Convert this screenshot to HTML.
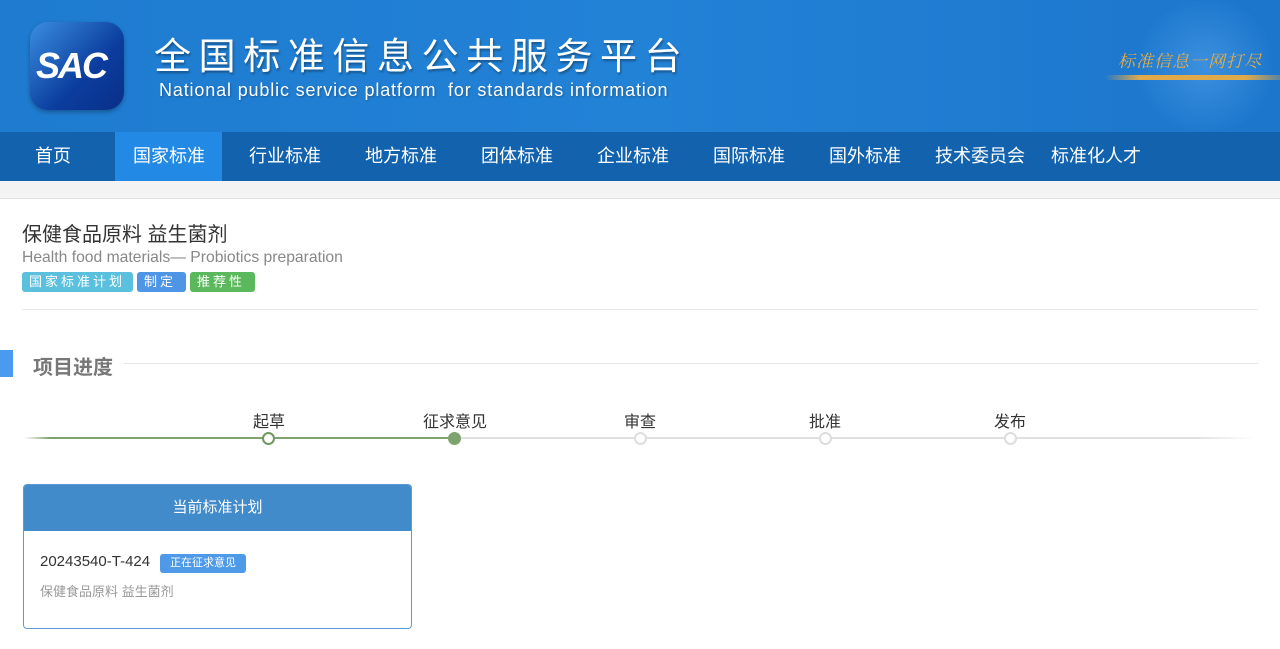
<!DOCTYPE html>
<html><head><meta charset="utf-8"><style>
*{margin:0;padding:0;box-sizing:border-box}
body{width:1280px;height:649px;overflow:hidden;background:#fff;font-family:"Liberation Sans","Noto Sans CJK SC",sans-serif;position:relative}
.hd{position:absolute;left:0;top:0;width:1280px;height:132px;background:linear-gradient(90deg,#1e7bd0 0%,#2282d6 50%,#1c76cc 100%)}
.nav{position:absolute;left:0;top:132px;width:1280px;height:49px;background:#1262ae}
.nav span{position:absolute;top:0;height:49px;line-height:49px;color:#fff;font-size:18px}
.band{position:absolute;left:0;top:181px;width:1280px;height:18px;background:#f3f3f3;border-bottom:1px solid #e2e2e2}
.abs{position:absolute}
.tag{position:absolute;top:272px;height:20px;line-height:20px;color:#fff;font-size:13px;letter-spacing:3px;border-radius:3px;padding-left:7px}
.lbl{position:absolute;top:408px;font-size:16px;color:#333;transform:translateX(-50%)}
.dot{position:absolute;top:432px;width:13px;height:13px;border-radius:50%;background:#fff;border:2px solid #ddd}
</style></head><body>
<div class="hd">
 <div class="abs" style="left:30px;top:22px;width:94px;height:88px;border-radius:18px;background:linear-gradient(135deg,#3a8ee0,#0b3d9e 60%,#0a2f88);box-shadow:0 2px 4px rgba(0,0,0,.3)"></div>
 <div class="abs" style="left:36px;top:45px;font:italic bold 36px 'Liberation Sans',sans-serif;color:#fff;letter-spacing:-2px">SAC</div>
 <div class="abs" style="left:154px;top:26px;font-size:37px;color:#fff;letter-spacing:7.6px;text-shadow:1px 2px 2px rgba(0,0,0,.35)">全国标准信息公共服务平台</div>
 <div class="abs" style="left:159px;top:80px;font-size:18px;color:#fff;letter-spacing:0.85px;text-shadow:1px 1px 2px rgba(0,0,0,.3);white-space:pre">National public service platform  for standards information</div>
 <div class="abs" style="left:1130px;top:0;width:150px;height:132px;border-radius:50%;background:radial-gradient(circle,rgba(120,190,255,.35),rgba(30,120,210,0) 70%)"></div>
 <div class="abs" style="left:1105px;top:75px;width:175px;height:5px;background:linear-gradient(90deg,rgba(230,170,60,0),#e0a94a 20%,#e0a94a 80%,rgba(230,170,60,.3))"></div>
 <div class="abs" style="left:1118px;top:47px;font-size:17px;font-style:italic;color:#e5ac45;letter-spacing:1px;font-family:'Noto Serif CJK SC',serif">标准信息一网打尽</div>
</div>
<div class="nav">
 <div class="abs" style="left:115px;top:0;width:107px;height:49px;background:#228ae4"></div>
 <span style="left:35px">首页</span><span style="left:133px">国家标准</span><span style="left:249px">行业标准</span><span style="left:365px">地方标准</span><span style="left:481px">团体标准</span><span style="left:597px">企业标准</span><span style="left:713px">国际标准</span><span style="left:829px">国外标准</span><span style="left:935px">技术委员会</span><span style="left:1051px">标准化人才</span>
</div>
<div class="band"></div>
<div class="abs" style="left:22px;top:218px;font-size:20px;color:#333">保健食品原料 益生菌剂</div>
<div class="abs" style="left:22px;top:249px;font-size:15.7px;color:#888">Health food materials— Probiotics preparation</div>
<div class="tag" style="left:22px;width:111px;background:#5bc0de">国家标准计划</div>
<div class="tag" style="left:137px;width:49px;background:#4f95e6">制定</div>
<div class="tag" style="left:190px;width:65px;background:#5cb85c">推荐性</div>
<div class="abs" style="left:22px;top:309px;width:1236px;height:1px;background:#e8e8e8"></div>
<div class="abs" style="left:0;top:350px;width:13px;height:27px;background:#4a9bf0"></div>
<div class="abs" style="left:33px;top:351px;font-size:20px;color:#777;font-weight:bold">项目进度</div>
<div class="abs" style="left:124px;top:363px;width:1134px;height:1px;background:#e6e6e6"></div>
<div class="lbl" style="left:269px">起草</div><div class="lbl" style="left:455px">征求意见</div><div class="lbl" style="left:640px">审查</div><div class="lbl" style="left:825px">批准</div><div class="lbl" style="left:1010px">发布</div>
<div class="abs" style="left:24px;top:437px;width:1232px;height:2px;background:linear-gradient(90deg,#fff,#e0e0e0 5%,#e0e0e0 95%,#fff)"></div>
<div class="abs" style="left:24px;top:437px;width:431px;height:2px;background:linear-gradient(90deg,#fff,#7ea36e 6%)"></div>
<div class="dot" style="left:262px;border-color:#6e9a5e"></div>
<div class="dot" style="left:448px;background:#7ea36e;border-color:#7ea36e"></div>
<div class="dot" style="left:634px"></div><div class="dot" style="left:819px"></div><div class="dot" style="left:1004px"></div>
<div class="abs" style="left:23px;top:484px;width:389px;height:145px;border:1px solid #5a9ad6;border-radius:4px;overflow:hidden">
 <div style="height:46px;background:#428bca;color:#fff;font-size:15px;text-align:center;line-height:46px">当前标准计划</div>
 <div class="abs" style="left:16px;top:68px;font-size:15px;color:#333">20243540-T-424</div>
 <div class="abs" style="left:136px;top:69px;width:86px;height:19px;background:#4f9ae8;border-radius:3px;color:#fff;font-size:11px;line-height:19px;text-align:center">正在征求意见</div>
 <div class="abs" style="left:16px;top:96px;font-size:13px;color:#999">保健食品原料 益生菌剂</div>
</div>
</body></html>
